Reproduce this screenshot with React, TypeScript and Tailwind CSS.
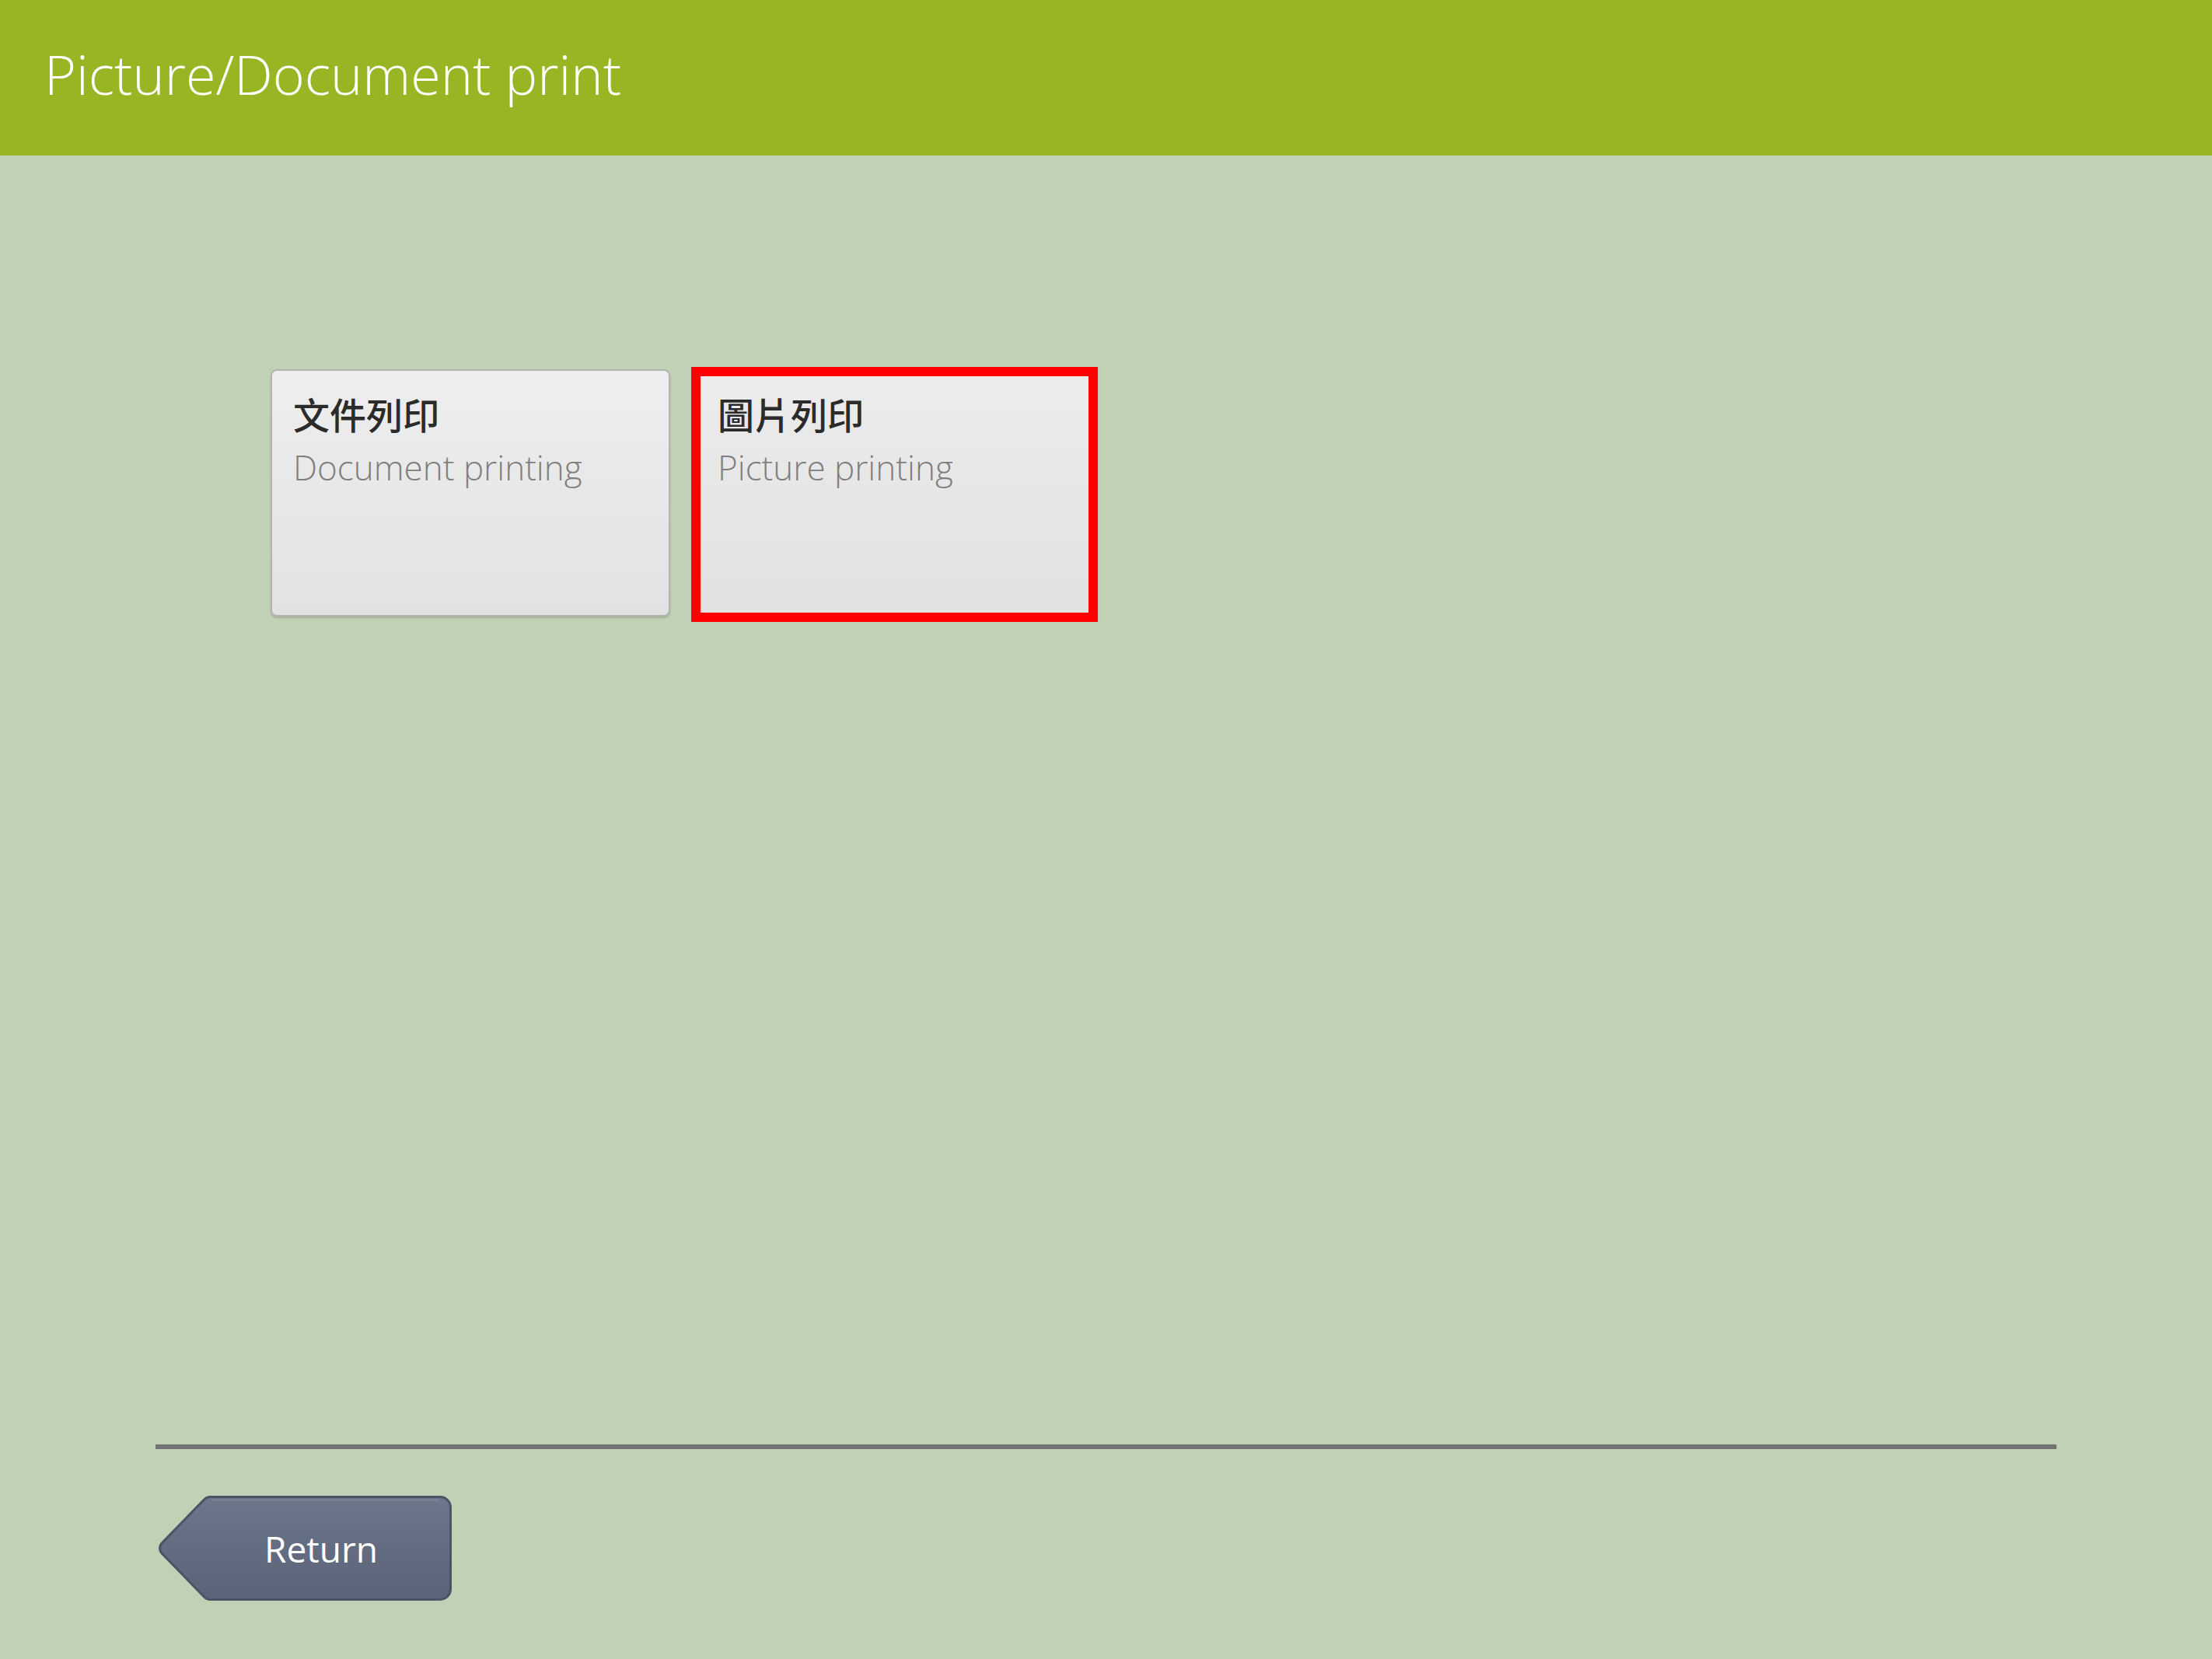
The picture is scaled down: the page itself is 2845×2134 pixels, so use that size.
const SANS = "font-['Open_Sans','Noto_Sans',sans-serif]";
const CJK = "font-['Noto_Sans_CJK_TC','Noto_Sans_CJK_SC',sans-serif]";

function ReturnButton() {
  return (
    <button className="relative w-[378px] h-[137px] ml-[204px] flex items-center justify-center">
      <svg className="absolute inset-0" width="378" height="137" viewBox="0 0 378 137" fill="none">
        <defs>
          <linearGradient id="retFill" x1="0" y1="0" x2="0" y2="1">
            <stop offset="0" stopColor="#6c778b" />
            <stop offset="1" stopColor="#5a6277" />
          </linearGradient>
        </defs>
        <path
          d="M66 2.5H362a13.5 13.5 0 0 1 13.5 13.5V121a13.5 13.5 0 0 1-13.5 13.5H66a10 10 0 0 1-7-3L5 76a10 10 0 0 1 0-15L59 5.5a10 10 0 0 1 7-3z"
          fill="url(#retFill)"
          stroke="#4b5366"
          strokeWidth="3"
          strokeLinejoin="round"
        />
        <path d="M68 6.5H360" stroke="#7d879a" strokeWidth="2" />
      </svg>
      <span className={`relative ${SANS} text-[46px] leading-none text-white ml-[40px]`}>Return</span>
    </button>
  );
}

function Card({ zh, en, active }: { zh: string; en: string; active?: boolean }) {
  return (
    <div
      className={
        active
          ? "w-[523px] h-[328px] border-[12px] border-[#ff0000] bg-gradient-to-b from-[#ececec] to-[#e1e1e1] pl-[22px] pt-[24px]"
          : "w-[514px] h-[318px] mt-[3px] rounded-[8px] border-2 border-[#b3b3b3] bg-gradient-to-b from-[#eeeeee] to-[#e2e2e2] shadow-[0_2px_2px_rgba(0,0,0,0.15)] pl-[27px] pt-[31px]"
      }
    >
      <div className={`${CJK} text-[47px] leading-none font-medium text-[#2b2b2b]`}>{zh}</div>
      <div className={`${SANS} text-[44px] leading-none font-light text-[#7f7f7f] mt-[24px]`}>{en}</div>
    </div>
  );
}

export default function App() {
  return (
    <div className="w-[2845px] h-[2134px] flex flex-col bg-[#c0d1b5] overflow-hidden">
      {/* Header */}
      <header className="h-[200px] shrink-0 bg-[#98b524] pl-[57px] pt-[60px]">
        <h1 className={`${SANS} text-[70px] leading-none font-light text-white`}>Picture/Document print</h1>
      </header>

      {/* Options */}
      <main className="h-[1658px] shrink-0 pt-[272px] pl-[348px]">
        <div className="flex items-start gap-[27px]">
          <Card zh="文件列印" en="Document printing" />
          <Card zh="圖片列印" en="Picture printing" active />
        </div>
      </main>

      {/* Footer */}
      <div className="ml-[200px] w-[2445px] h-[6px] bg-[#737373]" />
      <div className="pt-[59px]">
        <ReturnButton />
      </div>
    </div>
  );
}
